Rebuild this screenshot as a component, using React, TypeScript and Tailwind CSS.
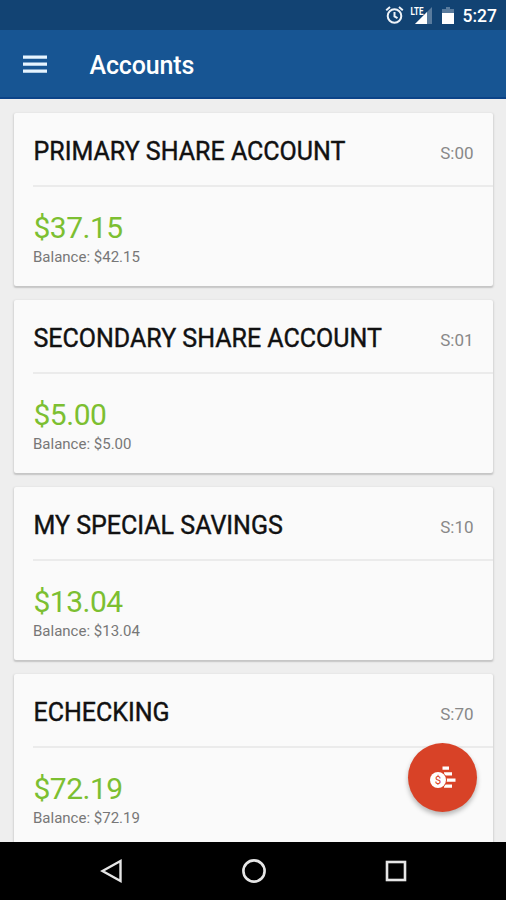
const accounts = [
  { name: "PRIMARY SHARE ACCOUNT", id: "S:00", available: "$37.15", balance: "$42.15" },
  { name: "SECONDARY SHARE ACCOUNT", id: "S:01", available: "$5.00", balance: "$5.00" },
  { name: "MY SPECIAL SAVINGS", id: "S:10", available: "$13.04", balance: "$13.04" },
  { name: "ECHECKING", id: "S:70", available: "$72.19", balance: "$72.19" },
];

function StatusBar() {
  return (
    <div className="flex h-[30px] shrink-0 items-center justify-end bg-[#124373] pr-[9px] text-white">
      <svg className="mr-[6px] h-[20px] w-[20px]" viewBox="0 0 20 20" fill="none" stroke="#eef3f8" strokeWidth="2">
        <circle cx="10.5" cy="11" r="6.8" />
        <path d="M2.2 5.2 6 2M18.8 5.2 15 2M10.5 7v4.4l3 1.8" />
      </svg>
      <svg className="mr-[9px] h-[22px] w-[23px]" viewBox="0 0 23 22">
        <path d="M22 3v17H5z" fill="#597b9d" />
        <path d="M17 8v12H5z" fill="#fff" />
        <text x="0.5" y="10.5" fontFamily="Roboto, sans-serif" fontSize="11" fontWeight="700" fill="#fff" textLength="13" lengthAdjust="spacingAndGlyphs">
          LTE
        </text>
      </svg>
      <svg className="mr-[9px] h-[20px] w-[12px]" viewBox="0 0 12 20">
        <path d="M4 2h4v2h4v5H0V4h4z" fill="#597b9d" />
        <path d="M0 8h12v11H0z" fill="#fff" />
      </svg>
      <span className="pt-px text-[17.5px] font-medium leading-[30px]">5:27</span>
    </div>
  );
}

function AccountCard({ name, id, available, balance }: (typeof accounts)[number]) {
  return (
    <section className="h-[173px] shrink-0 rounded-[2px] bg-[#fafafa] shadow-[0_1px_2px_1px_rgba(0,0,0,0.10),0_2px_1px_rgba(0,0,0,0.08)]">
      <div className="ml-[19px] flex h-[74px] items-center justify-between border-b-2 border-[#ebebeb] pr-[19.5px]">
        <h2 className="pl-[0.5px] pt-[5px] text-[25px] font-normal leading-[30px] text-[#111] [-webkit-text-stroke:0.4px_#111]">{name}</h2>
        <span className="pt-[8px] text-[17px] leading-[22px] text-[#888]">{id}</span>
      </div>
      <div className="pl-[19px] pt-[23px]">
        <p className="pl-[0.5px] text-[30px] leading-[36px] tracking-[-0.5px] text-[#7cbf31]">{available}</p>
        <p className="text-[15px] leading-[22px] text-[#777]">Balance: {balance}</p>
      </div>
    </section>
  );
}

export default function App() {
  return (
    <div className="relative flex h-[900px] w-[506px] flex-col overflow-hidden bg-[#eeeeee] font-['Roboto',sans-serif]">
      <StatusBar />
      <header className="flex h-[69px] shrink-0 items-center border-b-2 border-[#0b4388] bg-[#175593] pl-[23px] text-white">
        <svg className="h-[18px] w-[24px]" viewBox="0 0 24 18" fill="#e6f4ff">
          <path d="M0 0.5h24v3.2H0zM0 7.5h24v3.2H0zM0 14.5h24v3.2H0z" />
        </svg>
        <h1 className="ml-[42.5px] pt-[4px] text-[25px] font-medium leading-[30px] tracking-[-0.15px]">Accounts</h1>
      </header>
      <main className="flex min-h-0 flex-1 flex-col gap-[14px] overflow-hidden pl-[14px] pr-[13px] pt-[14px]">
        {accounts.map((account) => (
          <AccountCard key={account.id} {...account} />
        ))}
      </main>
      <nav className="flex h-[58px] shrink-0 items-center bg-black pl-[100px]">
        <svg className="h-[26px] w-[24px]" viewBox="0 0 24 26" fill="none" stroke="#e6e6e6" strokeWidth="2.4">
          <path d="M2.5 13 20.5 3v20z" />
        </svg>
        <svg className="ml-[116.5px] h-[26px] w-[26px]" viewBox="0 0 26 26" fill="none" stroke="#e6e6e6" strokeWidth="2.6">
          <circle cx="13" cy="13" r="10.6" />
        </svg>
        <svg className="ml-[117.5px] h-[24px] w-[24px]" viewBox="0 0 24 24" fill="none" stroke="#e6e6e6" strokeWidth="2.6">
          <rect x="3" y="3" width="18" height="18" />
        </svg>
      </nav>
      <button className="absolute left-[408px] top-[743px] h-[69px] w-[69px] rounded-full bg-[#d84227] shadow-[0_3px_5px_rgba(0,0,0,0.28)]">
        <svg className="h-[69px] w-[69px]" viewBox="0 0 69 69">
          <path d="M34.5 23.5h6.5v3.2h-6.5zM36 29.3h8v3.2h-8zM37 35.5h10.5v3.2H37zM36 41.5h8v3.2h-8z" fill="#fff" />
          <circle cx="30" cy="37" r="9" fill="#d84227" />
          <circle cx="30" cy="37" r="8" fill="#fff" />
          <text x="30" y="41" textAnchor="middle" fontFamily="Roboto, sans-serif" fontSize="11.5" fill="#d84227">
            $
          </text>
        </svg>
      </button>
    </div>
  );
}
